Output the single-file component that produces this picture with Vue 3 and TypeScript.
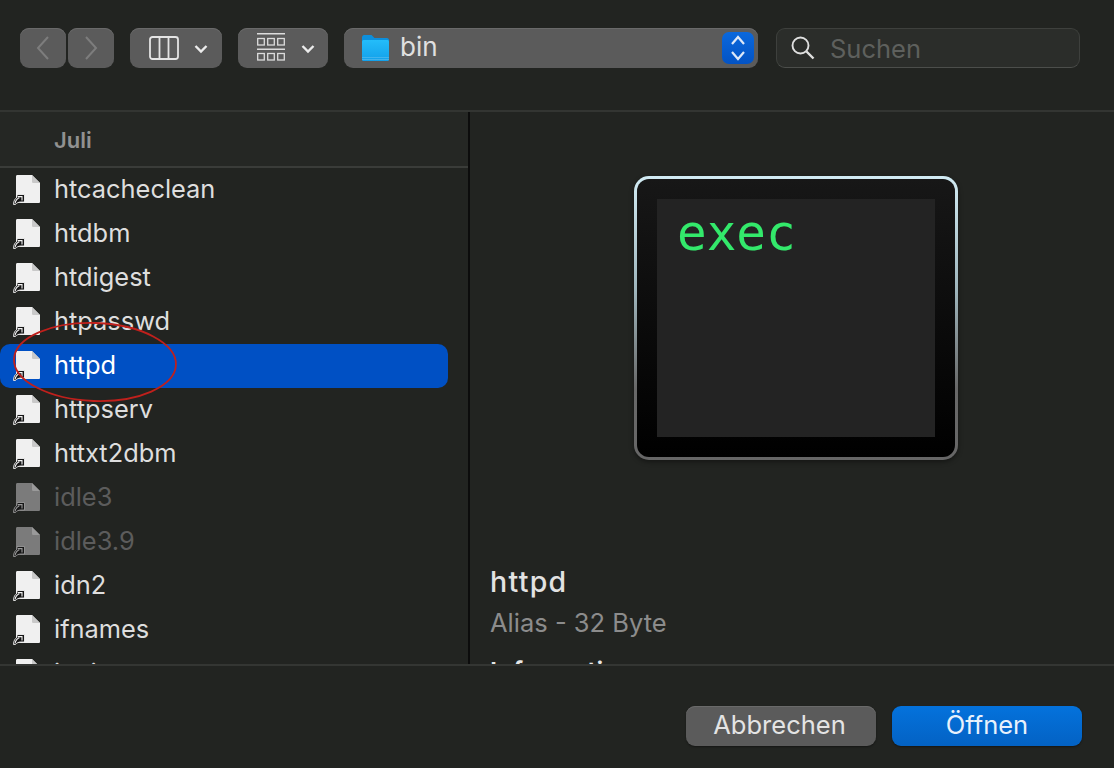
<script setup lang="ts">
interface Row { name: string; dim?: boolean; selected?: boolean }
const rows: Row[] = [
  { name: 'htcacheclean' },
  { name: 'htdbm' },
  { name: 'htdigest' },
  { name: 'htpasswd' },
  { name: 'httpd', selected: true },
  { name: 'httpserv' },
  { name: 'httxt2dbm' },
  { name: 'idle3', dim: true },
  { name: 'idle3.9', dim: true },
  { name: 'idn2' },
  { name: 'ifnames' },
  { name: 'ionice' },
]
</script>

<template>
  <div class="dialog">
    <header class="toolbar">
      <div class="nav">
        <button class="btn nav-btn">
          <svg width="16" height="26" viewBox="0 0 16 26"><path d="M13 2 3 13l10 11" fill="none" stroke="#7d7d7d" stroke-width="2"/></svg>
        </button>
        <button class="btn nav-btn">
          <svg width="16" height="26" viewBox="0 0 16 26"><path d="m3 2 10 11L3 24" fill="none" stroke="#7d7d7d" stroke-width="2"/></svg>
        </button>
      </div>
      <button class="btn view-btn">
        <svg width="30" height="24" viewBox="0 0 30 24"><rect x="1" y="1" width="28" height="22" rx="2.5" fill="none" stroke="#e4e4e4" stroke-width="1.8"/><path d="M10.5 1v22M19.5 1v22" stroke="#e4e4e4" stroke-width="1.8"/></svg>
        <svg class="chev" width="14" height="10" viewBox="0 0 14 10"><path d="m1.5 2 5.5 5.5L12.5 2" fill="none" stroke="#ececec" stroke-width="2.4"/></svg>
      </button>
      <button class="btn group-btn">
        <svg width="28" height="30" viewBox="0 0 28 30" fill="none" stroke="#dcdcdc" stroke-width="1.3"><path d="M0 .8h28M0 16.200h28" stroke-width="1.6"/><rect x=".7" y="5.500" width="6.600" height="6.500"/><rect x="10.700" y="5.500" width="6.600" height="6.500"/><rect x="20.700" y="5.500" width="6.600" height="6.500"/><rect x=".7" y="20.500" width="6.600" height="6.500"/><rect x="10.700" y="20.500" width="6.600" height="6.500"/><rect x="20.700" y="20.500" width="6.600" height="6.500"/></svg>
        <svg class="chev" width="14" height="10" viewBox="0 0 14 10"><path d="m1.5 2 5.5 5.5L12.5 2" fill="none" stroke="#ececec" stroke-width="2.4"/></svg>
      </button>
      <div class="btn path">
        <svg class="folder" width="29" height="30" viewBox="0 0 29 30">
          <defs><linearGradient id="fg" x1="0" y1="0" x2="0" y2="1"><stop offset="0" stop-color="#24bdfa"/><stop offset="1" stop-color="#13a0ea"/></linearGradient></defs>
          <path d="M1 4.500C1 3 2 2 3 2h7.500l3 3H26c1.200 0 2 1 2 2v2H1z" fill="#0c8fdc"/>
          <rect x="1" y="7" width="27" height="21" rx="1.500" fill="url(#fg)"/>
          <path d="M1 24.500h27M1 26.500h27" stroke="#4db8ee" stroke-width=".8"/>
        </svg>
        <span class="path-name">bin</span>
        <span class="stepper">
          <svg width="16" height="30" viewBox="0 0 16 30" fill="none" stroke="#dde8f8" stroke-width="2.200"><path d="m2 11 6-7 6 7M2 19l6 7 6-7"/></svg>
        </span>
      </div>
      <label class="search">
        <svg width="26" height="26" viewBox="0 0 26 26" fill="none" stroke="#dfdfdf"><circle cx="10.500" cy="10.500" r="8" stroke-width="1.900"/><path d="m16.500 16.500 7 7" stroke-width="2.400"/></svg>
        <span class="search-text">Suchen</span>
      </label>
    </header>

    <main class="body">
      <section class="list">
        <div class="list-head">Juli</div>
        <div class="rows">
          <div v-for="row in rows" :key="row.name" class="row" :class="{ selected: row.selected, dim: row.dim }">
            <svg class="file" width="30" height="32" viewBox="0 0 30 32">
              <path d="M4 2.500C4 1.500 4.500 1 5.500 1H20l8 8v18.500c0 1-.5 1.500-1.500 1.500h-21c-1 0-1.500-.5-1.500-1.500z" :fill="row.dim ? '#7b7b7b' : '#f0f0f0'"/>
              <path d="M20 1v6.500c0 1 .5 1.500 1.500 1.500H28z" :fill="row.dim ? '#9a9a9a' : '#c9c9c9'"/>
              <path d="M1.500 30.500c0-3.500 1.500-6 3.500-7.200V20.500h7.500V28H9c-2.500 0-4.500 1-5.500 2.500z" fill="#161616" :stroke="row.dim ? '#9a9a9a' : '#f2f2f2'" stroke-width=".9" stroke-linejoin="round"/>
              <path d="M3 29.500c.6-3 2-4.800 4.300-5.800M6 22.600h4v4" fill="none" :stroke="row.dim ? '#9a9a9a' : '#f6f6f6'" stroke-width="1.100"/>
            </svg>
            <span class="row-name">{{ row.name }}</span>
          </div>
        </div>
        <svg class="ring" width="170" height="86" viewBox="0 0 170 86">
          <ellipse cx="85" cy="43" rx="81" ry="39" transform="rotate(2 85 43)" fill="none" stroke="#c0201c" stroke-width="1.800"/>
        </svg>
      </section>

      <section class="preview">
        <div class="exec-icon">
          <div class="exec-screen">exec</div>
        </div>
        <div class="info">
          <div class="info-name">httpd</div>
          <div class="info-kind">Alias - 32 Byte</div>
          <div class="info-head">Informationen</div>
        </div>
      </section>
    </main>

    <footer class="footer">
      <button class="action cancel">Abbrechen</button>
      <button class="action open">Öffnen</button>
    </footer>
  </div>
</template>

<style>
html, body { margin: 0; background: #222421; }
</style>

<style scoped>
.dialog {
  width: 1114px;
  height: 768px;
  background: #222421;
  display: flex;
  flex-direction: column;
  overflow: hidden;
  font-family: Inter, "Liberation Sans", sans-serif;
  color: #dedede;
}
.toolbar {
  height: 112px;
  box-sizing: border-box;
  flex: none;
  padding: 28px 0 0 20px;
  display: flex;
  align-items: flex-start;
  border-bottom: 2px solid #333532;
}
.btn {
  height: 40px;
  box-sizing: border-box;
  border: 0;
  padding: 0;
  border-radius: 9px;
  background: #5b5b5b;
  box-shadow: inset 0 1px 0 #6a6a6a;
  display: flex;
  align-items: center;
}
.nav { display: flex; gap: 2px; }
.nav-btn { width: 46px; justify-content: center; }
.view-btn { width: 92px; margin-left: 16px; padding-left: 19px; }
.group-btn { width: 90px; margin-left: 16px; padding-left: 19px; }
.chev { margin-left: 15px; margin-top: 1px; }
.group-btn .chev { margin-left: 16px; }
.path {
  width: 414px;
  margin-left: 16px;
  padding-left: 17px;
  position: relative;
}
.folder { flex: none; }
.path-name {
  margin-left: 10px;
  margin-bottom: 2px;
  font-size: 26px;
  line-height: 30px;
  color: #e0e0e0;
}
.stepper {
  margin-left: auto;
  margin-right: 4px;
  width: 32px;
  height: 32px;
  border-radius: 7px;
  background: linear-gradient(#0a68dd, #0353c4);
  display: flex;
  align-items: center;
  justify-content: center;
}
.search {
  width: 304px;
  height: 40px;
  box-sizing: border-box;
  margin-left: 18px;
  padding-left: 13px;
  border: 1px solid #3e403d;
  border-bottom-color: #4c4e4b;
  border-radius: 9px;
  background: #2b2d2a;
  display: flex;
  align-items: center;
}
.search-text {
  margin-left: 14px;
  font-size: 25.500px;
  color: #5e605d;
}
.body {
  flex: 1;
  min-height: 0;
  display: flex;
}
.list {
  width: 468px;
  flex: none;
  position: relative;
  overflow: hidden;
  border-right: 2px solid #0c0c0c;
  box-sizing: content-box;
}
.list-head {
  height: 56px;
  box-sizing: border-box;
  padding: 14px 0 0 54px;
  font-size: 22px;
  font-weight: 600;
  line-height: 28px;
  color: #919191;
  border-bottom: 2px solid #3a3c39;
  background: #252724;
}
.rows { padding-right: 20px; }
.row {
  height: 44px;
  display: flex;
  align-items: center;
  border-radius: 10px;
}
.row.selected { background: #0050c4; color: #fff; }
.row.dim { color: #5c5c5c; }
.file { flex: none; margin-left: 12px; margin-top: -1px; }
.row-name {
  margin-left: 12px;
  margin-top: -2px;
  font-size: 25.400px;
  line-height: 44px;
}
.ring {
  position: absolute;
  left: 10px;
  top: 207px;
}
.preview {
  flex: 1;
  min-width: 0;
  overflow: hidden;
}
.exec-icon {
  width: 324px;
  height: 284px;
  box-sizing: border-box;
  margin: 64px 0 0 164px;
  padding: 20px 20px;
  border-radius: 15px;
  border: 3px solid transparent;
  background:
    linear-gradient(#171717, #000) padding-box,
    linear-gradient(#d2ecf4 0%, #9fb6bd 40%, #686868 75%, #666 100%) border-box;
  box-shadow: 0 2px 5px rgba(0, 0, 0, .4);
}
.exec-screen {
  width: 278px;
  height: 238px;
  box-sizing: border-box;
  background: #232323;
  padding: 4px 0 0 20px;
  font-family: "DejaVu Sans Mono", monospace;
  font-size: 49.300px;
  line-height: 60px;
  color: #33e96b;
}
.info { margin: 106px 0 0 20px; }
.info-name {
  font-size: 28.500px;
  font-weight: 500;
  letter-spacing: 1.300px;
  line-height: 32px;
  color: #e2e2e2;
}
.info-kind {
  margin-top: 9px;
  font-size: 25.500px;
  line-height: 32px;
  color: #8c8c8c;
}
.info-head {
  margin-top: 17px;
  font-size: 26px;
  font-weight: 600;
  line-height: 32px;
  color: #e6e6e6;
}
.footer {
  height: 104px;
  flex: none;
  box-sizing: border-box;
  border-top: 2px solid #343633;
  padding: 40px 32px 0 0;
  display: flex;
  justify-content: flex-end;
  gap: 16px;
  background: #222421;
}
.action {
  width: 190px;
  height: 40px;
  border: 0;
  padding: 0 0 3px;
  border-radius: 9px;
  font-family: inherit;
  font-size: 25.500px;
  color: #e4e4e4;
  box-shadow: 0 1px 2px rgba(0, 0, 0, .4);
}
.cancel { padding-right: 3px; background: #5b5b5b; box-shadow: inset 0 1px 0 #6a6a6a, 0 1px 2px rgba(0,0,0,.4); }
.open { background: linear-gradient(#0472dc, #0362c4); color: #e8f1fc; }
</style>
